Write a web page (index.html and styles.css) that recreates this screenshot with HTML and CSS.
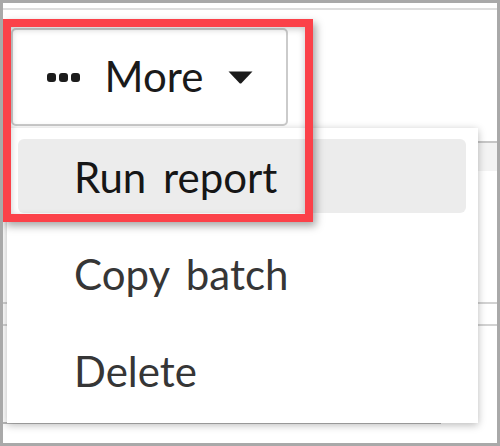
FILE: index.html
```html
<!DOCTYPE html>
<html>
<head>
<meta charset="utf-8">
<link rel="stylesheet" href="styles.css">
</head>
<body>
<div class="frame">
  <div class="topline"></div>
  <div class="toolbar">
    <button class="more-btn">
      <span class="dots"><i></i><i></i><i></i></span>
      <span class="label">More</span>
      <svg class="caret" width="25" height="13" viewBox="0 0 25 13"><path d="M0.5 0.5 H24.5 L13.6 12 Q12.5 13 11.4 12 Z" fill="#1b1b1b"/></svg>
    </button>
  </div>
  <div class="table">
    <div class="thead"></div>
    <div class="tbody">
      <div class="trow r1"></div>
      <div class="trow r2"></div>
    </div>
    <div class="footline"></div>
  </div>

  <ul class="menu">
    <li class="item"><span class="item-inner active">Run report</span></li>
    <li class="item"><span class="item-inner">Copy batch</span></li>
    <li class="item"><span class="item-inner">Delete</span></li>
  </ul>

  <div class="highlight-box"></div>
</div>
</body>
</html>
```
FILE: styles.css
```css
html, body {
  margin: 0;
  padding: 0;
  background: #ffffff;
}
.frame {
  position: relative;
  width: 500px;
  height: 446px;
  box-sizing: border-box;
  border: 3px solid #a9a9a9;
  background: #ffffff;
  overflow: hidden;
  font-family: "Lato", "Open Sans", sans-serif;
}
.topline {
  margin-top: 5px;
  height: 2px;
  background: #dedede;
}
.toolbar {
  display: flex;
  padding: 18px 0 0 8px;
}
.more-btn {
  width: 277px;
  height: 98px;
  box-sizing: border-box;
  border: 2px solid #cbcbcb;
  border-radius: 5px;
  background: #ffffff;
  display: flex;
  align-items: center;
  justify-content: center;
  gap: 25px;
  padding: 0 0 0 1px;
  font-family: "Lato", "Open Sans", sans-serif;
  font-size: 42px;
  color: #1a1a1a;
  cursor: pointer;
}
.dots {
  display: flex;
  gap: 3px;
}
.dots i {
  display: block;
  width: 9px;
  height: 9px;
  border-radius: 3px;
  background: #1c1c1c;
}
.label {
  line-height: 1;
  padding-bottom: 2px;
}
.caret {
  display: block;
  margin-top: 1px;
}
.table {
  margin-top: 15px;
}
.thead {
  height: 28px;
  border-top: 2px solid #c6c6c6;
  background: #f3f3f3;
}
.tbody {
  padding-top: 131px;
}
.trow {
  height: 20px;
  border-top: 2px solid #d2d2d2;
}
.footline {
  margin-top: 76px;
  width: 438px;
  height: 2px;
  background: #b9b9b9;
}
.menu {
  position: absolute;
  left: 4px;
  top: 125px;
  width: 471px;
  height: 295px;
  margin: 0;
  padding: 0;
  list-style: none;
  box-sizing: border-box;
  background: #ffffff;
  box-shadow: 0 2px 8px rgba(0, 0, 0, 0.28);
}
.item {
  padding: 11px 12px 12px 11px;
  height: 97px;
  box-sizing: border-box;
}
.item-inner {
  display: block;
  height: 74px;
  line-height: 77px;
  padding-left: 56px;
  border-radius: 6px;
  font-size: 42px;
  word-spacing: 6px;
  color: #363636;
  white-space: nowrap;
}
.item-inner.active {
  background: #ececec;
  color: #161616;
}
.highlight-box {
  position: absolute;
  left: 0;
  top: 16px;
  width: 310px;
  height: 203px;
  box-sizing: border-box;
  border: 8px solid #fb4149;
  box-shadow: 3px 4px 8px rgba(0, 0, 0, 0.35), inset 0 2px 7px rgba(0, 0, 0, 0.22);
  pointer-events: none;
}
```
